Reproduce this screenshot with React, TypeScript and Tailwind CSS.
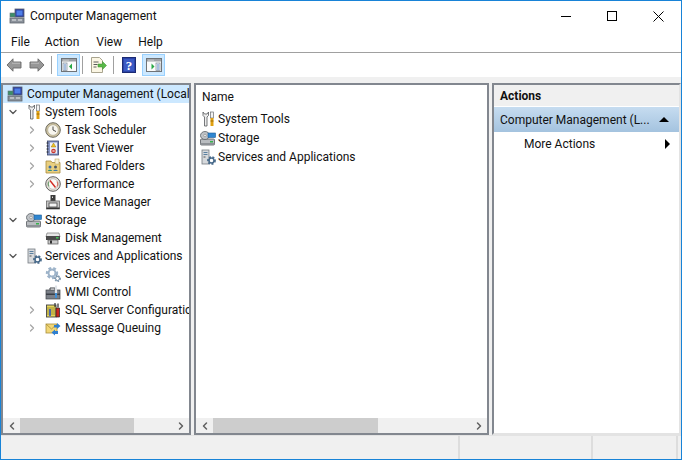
import type { ReactNode } from 'react'
import { ChevronDown, ChevronRight, ChevronLeft } from 'lucide-react'

const Ico = ({ children }: { children: ReactNode }) => (
  <svg width={16} height={16} viewBox="0 0 16 16" className="shrink-0">
    {children}
  </svg>
)

const ComputerIcon = () => (
  <Ico>
    <rect x="6" y="1" width="9" height="8" fill="#2a3f9e" stroke="#5b6170" strokeWidth="0.8" />
    <rect x="7.5" y="2.5" width="6" height="5" fill="#4f7fe8" />
    <rect x="1" y="5" width="5" height="4" fill="#3c8f68" stroke="#63707a" strokeWidth="0.6" />
    <rect x="1" y="10" width="14" height="5" fill="#8b929b" stroke="#5e646c" strokeWidth="0.8" />
    <path d="M3 12h4M9 12h4" stroke="#e8eaec" strokeWidth="1" />
  </Ico>
)

const ToolsIcon = () => (
  <Ico>
    <path d="M3 1v3.500l1.500 1.500v9h2.500V6l1.500-1.500V1L7 3H4.500z" fill="#ececec" stroke="#55585c" strokeWidth="0.8" />
    <rect x="10.500" y="1" width="3" height="6" fill="#f2f2f2" stroke="#6a6d70" strokeWidth="0.7" />
    <path d="M12 7v8" stroke="#e0a010" strokeWidth="3" />
    <path d="M10.500 10h3" stroke="#8a5c00" strokeWidth="0.8" />
  </Ico>
)

const ClockIcon = () => (
  <Ico>
    <circle cx="8" cy="8" r="7.300" fill="#cfc4a2" stroke="#6d6a5e" />
    <circle cx="8" cy="8" r="5.300" fill="#f8f6ee" stroke="#a9a28a" strokeWidth="0.6" />
    <path d="M8 4.500V8l3 1.500" fill="none" stroke="#4a4a4a" strokeWidth="1" />
  </Ico>
)

const LogIcon = () => (
  <Ico>
    <rect x="2.500" y="1" width="11" height="14" fill="#8493c4" stroke="#39456f" strokeWidth="0.8" />
    <path d="M1.500 3h2M1.500 6h2M1.500 9h2M1.500 12h2" stroke="#222" strokeWidth="0.9" />
    <rect x="5" y="2.500" width="7" height="11" fill="#eef0f6" />
    <path d="M8.500 3l2.300 4H6.200z" fill="#f2c420" stroke="#9c7a10" strokeWidth="0.5" />
    <circle cx="8.500" cy="11" r="2.300" fill="#c8352c" />
    <path d="M7.600 10.100l1.800 1.800M9.400 10.100l-1.800 1.800" stroke="#fff" strokeWidth="0.7" />
  </Ico>
)

const FolderIcon = () => (
  <Ico>
    <path d="M1 3h5l1 1.500h8V15H1z" fill="#e9cf7f" stroke="#a78b3e" strokeWidth="0.8" />
    <rect x="10" y="1" width="4" height="5" fill="#f7f0d0" stroke="#b59b50" strokeWidth="0.5" />
    <circle cx="5" cy="9" r="1.500" fill="#3c6fa8" />
    <path d="M2.800 13c.3-1.800 4-1.800 4.400 0z" fill="#2f8f7a" />
    <circle cx="10.500" cy="9" r="1.500" fill="#4c5a68" />
    <path d="M8.200 13c.3-1.800 4.300-1.800 4.600 0z" fill="#3a78b0" />
  </Ico>
)

const GaugeIcon = () => (
  <Ico>
    <circle cx="8" cy="8" r="7.300" fill="#e8e4da" stroke="#5f5f5f" />
    <circle cx="8" cy="8" r="5.300" fill="#fbfaf6" stroke="#999" strokeWidth="0.5" />
    <path d="M5 4.500L10.500 11.500" stroke="#d22b22" strokeWidth="1.400" />
    <path d="M4 10.500a4.500 4.500 0 0 1 0-5" fill="none" stroke="#3a7c3a" strokeWidth="0.8" />
    <path d="M12 5.500a4.500 4.500 0 0 1 0 5" fill="none" stroke="#c43" strokeWidth="0.8" />
  </Ico>
)

const DeviceIcon = () => (
  <Ico>
    <rect x="5.500" y="1" width="5" height="6" fill="#3b3b3b" />
    <rect x="7" y="2.500" width="1" height="1.500" fill="#ddd" />
    <rect x="1.500" y="7" width="13" height="8" fill="#c6c6c6" stroke="#666" strokeWidth="0.8" />
    <rect x="4" y="9" width="8" height="4" fill="#f4f4f4" stroke="#444" strokeWidth="0.8" />
    <rect x="1.500" y="13.500" width="13" height="1.500" fill="#333" />
  </Ico>
)

const StorageIcon = () => (
  <Ico>
    <rect x="0.500" y="9" width="14" height="6" rx="1" fill="#b9bcc0" stroke="#55595e" strokeWidth="0.8" />
    <rect x="10" y="11" width="3" height="1.500" fill="#35b24a" />
    <ellipse cx="5" cy="5.500" rx="4.500" ry="4" fill="#bfc3c7" stroke="#5b5f64" strokeWidth="0.8" />
    <circle cx="5" cy="5.500" r="1.300" fill="#eee" stroke="#777" strokeWidth="0.5" />
    <rect x="8" y="3" width="7.500" height="4.500" fill="#2f86d0" stroke="#1d5c96" strokeWidth="0.6" />
    <rect x="0.500" y="13" width="14" height="2" fill="#8d9196" />
  </Ico>
)

const DiskIcon = () => (
  <Ico>
    <path d="M2 3h12l1 4H1z" fill="#e6e6e6" stroke="#777" strokeWidth="0.7" />
    <rect x="1" y="6" width="14" height="4" fill="#4a4a4a" />
    <rect x="11" y="7" width="2.500" height="1.500" fill="#45c45a" />
    <rect x="3" y="10" width="10" height="4" fill="#c9c9c9" stroke="#555" strokeWidth="0.7" />
    <rect x="5" y="10.500" width="2" height="3" fill="#333" />
  </Ico>
)

const GearShape = ({ cx, cy, r, c }: { cx: number; cy: number; r: number; c: string }) => (
  <g>
    <circle cx={cx} cy={cy} r={r} fill="none" stroke={c} strokeWidth={r * 0.75} strokeDasharray={`${r * 0.55} ${r * 0.42}`} />
    <circle cx={cx} cy={cy} r={r * 0.78} fill="none" stroke={c} strokeWidth={r * 0.42} />
    <circle cx={cx} cy={cy} r={r * 0.35} fill="#fff" />
  </g>
)

const ServerIcon = () => (
  <Ico>
    <rect x="2" y="1" width="7" height="14" fill="#d6d9dc" stroke="#767c82" strokeWidth="0.8" />
    <path d="M3.500 3.500h4M3.500 5.500h4" stroke="#5a7f9f" strokeWidth="1" />
    <rect x="3.500" y="7.500" width="2" height="1" fill="#555" />
    <GearShape cx={11.500} cy={11.500} r={3.200} c="#4a6c8c" />
  </Ico>
)

const ServicesIcon = () => (
  <Ico>
    <GearShape cx={7} cy={7} r={4.500} c="#9db3c9" />
    <GearShape cx={12.500} cy={12.500} r={2.500} c="#7f97ad" />
  </Ico>
)

const WmiIcon = () => (
  <Ico>
    <rect x="1" y="6" width="14" height="9" fill="#7b8088" stroke="#3e4249" strokeWidth="0.7" />
    <path d="M5 6V4h5v2" fill="none" stroke="#3e4249" />
    <rect x="1" y="9.500" width="14" height="1.500" fill="#3b3f46" />
    <path d="M11 1.500v9" stroke="#dfe3e8" strokeWidth="2.200" />
    <path d="M11 9v5" stroke="#3f8fd6" strokeWidth="2" />
  </Ico>
)

const SqlIcon = () => (
  <Ico>
    <rect x="1.500" y="3" width="9.500" height="12" fill="#e6d65c" stroke="#444" strokeWidth="0.9" />
    <path d="M3 5v8M5 5v8M7 5v8M9 5v8" stroke="#8c7d28" strokeWidth="0.8" />
    <path d="M10 1v4" stroke="#333" strokeWidth="1.200" />
    <path d="M11 6h3.500v9H11z" fill="#c9261f" stroke="#222" strokeWidth="0.7" />
    <path d="M5 7v7" stroke="#2d54c4" strokeWidth="1.600" />
    <path d="M13 1.500v4" stroke="#555" strokeWidth="1.500" />
  </Ico>
)

const QueueIcon = () => (
  <Ico>
    <rect x="1" y="4" width="11" height="9" fill="#f2d777" stroke="#a88e3a" strokeWidth="0.8" />
    <path d="M1 4l5.500 5L12 4" fill="none" stroke="#a88e3a" strokeWidth="0.8" />
    <path d="M9 5h3V3l3.500 3L12 9V7.500H9z" fill="#2f7fd0" />
    <path d="M13 11h-3V9.500L6.500 12.500 10 15.500V14h3z" fill="#2f7fd0" />
  </Ico>
)

const PaneIcon = ({ side }: { side: 'left' | 'right' }) => (
  <svg width="16" height="14" viewBox="0 0 16 14" className="shrink-0">
    <rect x="0.500" y="0.500" width="15" height="13" fill="#fbfbfb" stroke="#6f7377" />
    <rect x="1" y="1" width="14" height="2.500" fill="#9da1a6" />
    <path d="M2.500 2.200h1M4.500 2.200h1M6.500 2.200h1" stroke="#eeeeee" />
    {side === 'left' ? (
      <>
        <rect x="2" y="5" width="4" height="7.500" fill="#e6eefa" stroke="#7f8a96" strokeWidth="0.7" />
        <path d="M3 7h2M3 9h2M3 11h2" stroke="#4a78b8" strokeWidth="0.8" />
        <path d="M11 5.500v6L8 8.500z" fill="#27a844" />
      </>
    ) : (
      <>
        <path d="M5.500 5.500v6l3-3z" fill="#27a844" />
        <rect x="10" y="5" width="4" height="7.500" fill="#e6eefa" stroke="#7f8a96" strokeWidth="0.7" />
        <path d="M11 7h2M11 9h2M11 11h2" stroke="#4a78b8" strokeWidth="0.8" />
      </>
    )}
  </svg>
)

const NavArrow = ({ flip }: { flip?: boolean }) => (
  <svg width="16" height="14" viewBox="0 0 16 14" className="shrink-0">
    <path
      d={flip ? 'M15 7L9 .800V4H1v6h8v3.200z' : 'M1 7L7 .800V4h8v6H7v3.200z'}
      fill="#979797"
      stroke="#6a6a6a"
      strokeWidth="0.9"
    />
    <path d={flip ? 'M2 5.200h8' : 'M6 5.200h8'} stroke="#c4c4c4" strokeWidth="0.9" />
  </svg>
)

const ExportIcon = () => (
  <svg width="16" height="16" viewBox="0 0 16 16" className="shrink-0">
    <path d="M.500.500h8l3 3v12H.500z" fill="#fbf6e4" stroke="#a9a48f" />
    <path d="M2.500 5h5M2.500 7.500h4M2.500 10h3" stroke="#5a5a5a" />
    <path d="M7 7h4.500V4.500l4 4-4 4V10H7z" fill="#58b947" stroke="#3a8f2e" strokeWidth="0.5" />
  </svg>
)

const HelpIcon = () => (
  <svg width="14" height="16" viewBox="0 0 14 16" className="shrink-0">
    <rect x="0.500" y="0.500" width="13" height="15" fill="#2c44a8" stroke="#1b2a74" />
    <rect x="2" y="2" width="10" height="12" fill="#3b5ac4" />
    <text x="7" y="13" textAnchor="middle" fontSize="13" fontWeight="700" fill="#fff" fontFamily="Liberation Serif, serif">?</text>
  </svg>
)

const Sep = ({ className }: { className: string }) => <div className={`h-[18px] w-px bg-[#a0a0a0] ${className}`} />

const ActiveBtn = ({ children, className }: { children: ReactNode; className: string }) => (
  <div className={`flex h-[22px] w-[23px] items-center justify-center border border-[#99d1ff] bg-[#cce8ff] ${className}`}>{children}</div>
)

type Node = { label: string; icon: ReactNode; arrow?: 'open' | 'closed'; level: 0 | 1 | 2; selected?: boolean }

const tree: Node[] = [
  { label: 'Computer Management (Local', icon: <ComputerIcon />, level: 0, selected: true },
  { label: 'System Tools', icon: <ToolsIcon />, arrow: 'open', level: 1 },
  { label: 'Task Scheduler', icon: <ClockIcon />, arrow: 'closed', level: 2 },
  { label: 'Event Viewer', icon: <LogIcon />, arrow: 'closed', level: 2 },
  { label: 'Shared Folders', icon: <FolderIcon />, arrow: 'closed', level: 2 },
  { label: 'Performance', icon: <GaugeIcon />, arrow: 'closed', level: 2 },
  { label: 'Device Manager', icon: <DeviceIcon />, level: 2 },
  { label: 'Storage', icon: <StorageIcon />, arrow: 'open', level: 1 },
  { label: 'Disk Management', icon: <DiskIcon />, level: 2 },
  { label: 'Services and Applications', icon: <ServerIcon />, arrow: 'open', level: 1 },
  { label: 'Services', icon: <ServicesIcon />, level: 2 },
  { label: 'WMI Control', icon: <WmiIcon />, level: 2 },
  { label: 'SQL Server Configuration Manager', icon: <SqlIcon />, arrow: 'closed', level: 2 },
  { label: 'Message Queuing', icon: <QueueIcon />, arrow: 'closed', level: 2 },
]

const Row = ({ node }: { node: Node }) => {
  const indent = node.level === 0 ? 'pl-[3px]' : node.level === 1 ? 'pl-[4px]' : 'pl-[23px]'
  const iconGap = node.level === 1 ? 'ml-[6px]' : node.level === 2 ? 'ml-[6px]' : ''
  const textGap = node.level === 1 ? 'ml-[3px]' : 'ml-[4px]'
  return (
    <div className={`flex h-[18px] items-center overflow-hidden whitespace-nowrap ${indent} ${node.selected ? 'bg-[#cce8ff]' : ''}`}>
      {node.level > 0 && (
        <span className="flex w-[12px] shrink-0 justify-center">
          {node.arrow === 'open' && <ChevronDown size={14} strokeWidth={2.5} color="#555555" />}
          {node.arrow === 'closed' && <ChevronRight size={14} strokeWidth={2.5} color="#a6a6a6" />}
        </span>
      )}
      <span className={`flex w-[17px] shrink-0 justify-center ${iconGap}`}>{node.icon}</span>
      <span className={textGap}>{node.label}</span>
    </div>
  )
}

const HScroll = ({ thumb }: { thumb: string }) => (
  <div className="flex h-[15px] shrink-0 items-center bg-[#f0f0f0]">
    <span className="flex w-[17px] shrink-0 justify-center">
      <ChevronLeft size={12} strokeWidth={3} color="#606060" />
    </span>
    <div className="h-full min-w-0 flex-1">
      <div className={`h-full bg-[#cdcdcd] ${thumb}`} />
    </div>
    <span className="flex w-[17px] shrink-0 justify-center">
      <ChevronRight size={12} strokeWidth={3} color="#606060" />
    </span>
  </div>
)

export default function App() {
  return (
    <div className="flex h-[460px] w-[682px] flex-col overflow-hidden border border-[#1883d7] bg-[#f0f0f0] font-['Roboto',sans-serif] text-[12px] text-[#111111]">
      <div className="flex h-[30px] shrink-0 items-center bg-white">
        <div className="ml-[8px]">
          <ComputerIcon />
        </div>
        <span className="ml-[5px]">Computer Management</span>
        <div className="ml-auto flex h-full">
          <div className="flex w-[46px] items-center justify-center">
            <div className="h-px w-[10px] bg-black" />
          </div>
          <div className="flex w-[46px] items-center justify-center">
            <div className="h-[10px] w-[10px] border border-black" />
          </div>
          <div className="flex w-[46px] items-center justify-center">
            <svg width="11" height="11" viewBox="0 0 11 11">
              <path d="M.5.500l10 10M10.500.500l-10 10" stroke="#000" strokeWidth="1" />
            </svg>
          </div>
        </div>
      </div>
      <div className="flex h-[22px] shrink-0 items-center border-b border-[#a0a0a0] bg-white pl-[10px]">
        <span>File</span>
        <span className="ml-[15px]">Action</span>
        <span className="ml-[17px]">View</span>
        <span className="ml-[16px]">Help</span>
      </div>
      <div className="flex h-[24px] shrink-0 items-center bg-white pl-[5px]">
        <NavArrow />
        <div className="ml-[7px]">
          <NavArrow flip />
        </div>
        <Sep className="ml-[6px]" />
        <ActiveBtn className="ml-[5px]">
          <PaneIcon side="left" />
        </ActiveBtn>
        <Sep className="ml-[2px]" />
        <div className="ml-[5px] flex w-[22px] justify-center">
          <ExportIcon />
        </div>
        <Sep className="ml-[3px]" />
        <div className="ml-[4px] flex w-[22px] justify-center">
          <HelpIcon />
        </div>
        <ActiveBtn className="ml-[2px]">
          <PaneIcon side="right" />
        </ActiveBtn>
      </div>
      <div className="flex min-h-0 flex-1 gap-[3px] pt-[6px]">
        <div className="flex w-[190px] shrink-0 flex-col border-2 border-[#82878f] bg-white">
          <div className="min-h-0 flex-1 overflow-hidden">
            {tree.map((n) => (
              <Row key={n.label} node={n} />
            ))}
          </div>
          <HScroll thumb="w-[114px]" />
        </div>
        <div className="flex w-[295px] shrink-0 flex-col border-2 border-[#82878f] bg-white">
          <div className="min-h-0 flex-1">
            <div className="flex h-[23px] items-center pl-[6px] pt-[1px]">Name</div>
            <div className="flex h-[19px] items-center gap-[2px] pl-[4px] pt-[3px]">
              <ToolsIcon />
              <span>System Tools</span>
            </div>
            <div className="flex h-[19px] items-center gap-[2px] pl-[4px] pt-[2px]">
              <StorageIcon />
              <span>Storage</span>
            </div>
            <div className="flex h-[19px] items-center gap-[2px] pl-[4px] pt-[2px]">
              <ServerIcon />
              <span>Services and Applications</span>
            </div>
          </div>
          <HScroll thumb="w-[165px]" />
        </div>
        <div className="flex min-w-0 flex-1 flex-col border-2 border-t-[#82878f] border-r-[#e3e3e3] border-b-[#e3e3e3] border-l-[#82878f] bg-white">
          <div className="flex h-[21px] shrink-0 items-center bg-[#f0f0f0] pl-[6px] font-bold">Actions</div>
          <div className="mt-px flex h-[25px] shrink-0 items-center justify-between whitespace-nowrap bg-gradient-to-b from-[#c6dcf0] to-[#a4c3df] pl-[6px] pr-[10px]">
            <span>Computer Management (L...</span>
            <span className="mb-[1px] h-0 w-0 border-r-[5px] border-b-[5px] border-l-[5px] border-r-transparent border-b-black border-l-transparent" />
          </div>
          <div className="flex h-[23px] shrink-0 items-center justify-between pl-[30px] pr-[9px]">
            <span>More Actions</span>
            <span className="h-0 w-0 border-t-[5px] border-b-[5px] border-l-[5px] border-t-transparent border-b-transparent border-l-black" />
          </div>
        </div>
      </div>
      <div className="flex h-[24px] shrink-0 border-t border-[#e3e3e3]">
        <div className="w-[459px] border-r-2 border-[#dddddd]" />
        <div className="w-[133px] border-r-2 border-[#dddddd]" />
        <div className="w-[85px] border-r-2 border-[#dddddd]" />
      </div>
    </div>
  )
}
